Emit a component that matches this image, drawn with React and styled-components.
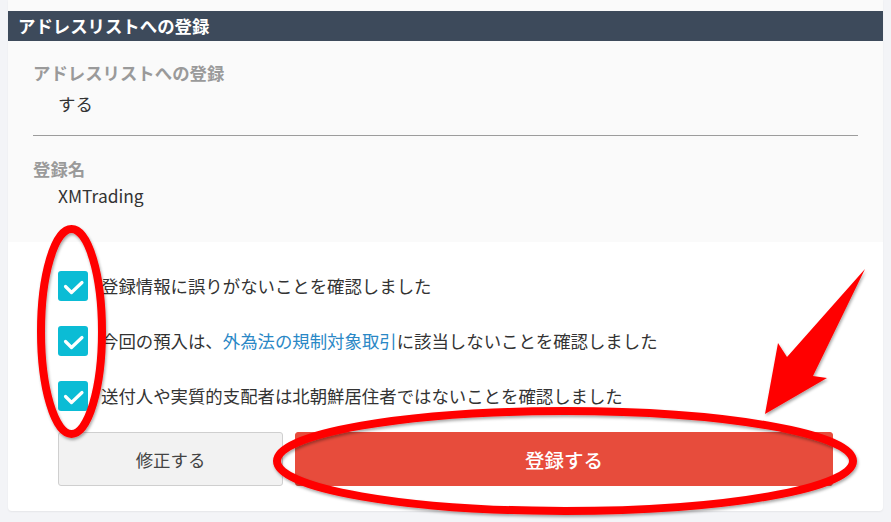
import React from "react";
import styled, { createGlobalStyle } from "styled-components";

const GlobalStyle = createGlobalStyle`
  html, body {
    margin: 0;
    padding: 0;
    background: #f3f4f7;
  }
  body {
    font-family: "Noto Sans CJK JP", "Noto Sans", sans-serif;
    color: #333;
  }
  * { box-sizing: border-box; }
`;

const Page = styled.div`
  position: relative;
  width: 891px;
  height: 522px;
  padding: 0 8px;
  overflow: hidden;
`;

const Card = styled.div`
  background: #ffffff;
  border-radius: 0 0 4px 4px;
  box-shadow: 0 1px 2px rgba(0, 0, 0, 0.06);
  overflow: hidden;
`;

const PrevTail = styled.div`
  height: 11px;
  background: #fafafa;
`;

const Header = styled.h2`
  margin: 0;
  height: 30px;
  line-height: 30px;
  padding-left: 10px;
  background: #3d4a5b;
  color: #ffffff;
  font-size: 17.4px;
  font-weight: 700;
`;

const Info = styled.div`
  background: #fafafa;
  padding: 18.5px 25px 33px;
`;

const Label = styled.div`
  font-size: 17.4px;
  line-height: 26px;
  font-weight: 700;
  color: #9a9a9a;
`;

const Value = styled.div`
  font-size: 17.4px;
  line-height: 26px;
  color: #333;
  padding-left: 25px;
  margin-top: ${(p) => p.$gap}px;
`;

const Divider = styled.hr`
  border: 0;
  border-top: 1px solid #9c9c9c;
  margin: 18px 0 19.5px;
`;

const Confirm = styled.div`
  padding: 29px 50px 25px;
`;

const CheckList = styled.div`
  display: flex;
  flex-direction: column;
  gap: 25px;
`;

const CheckRow = styled.label`
  display: flex;
  align-items: center;
  gap: 13px;
  font-size: 17.4px;
  line-height: 30px;
  color: #333;
`;

const Box = styled.span`
  flex: none;
  width: 30px;
  height: 30px;
  border-radius: 3px;
  background: #0bbcd5;
  display: flex;
  align-items: center;
  justify-content: center;
`;

const Link = styled.a`
  color: #2a88c6;
  text-decoration: none;
`;

const Buttons = styled.div`
  display: grid;
  grid-template-columns: 225px 1fr;
  gap: 12px;
  margin-top: 21px;
`;

const Button = styled.button`
  height: 54px;
  border-radius: 3px;
  font-family: "Noto Sans CJK JP", "Noto Sans", sans-serif;
  cursor: pointer;
  background: ${(p) => (p.$primary ? "#e74c3c" : "#f2f2f2")};
  border: 1px solid ${(p) => (p.$primary ? "#e74c3c" : "#cfcfcf")};
  color: ${(p) => (p.$primary ? "#ffffff" : "#444")};
  font-size: ${(p) => (p.$primary ? "19.5px" : "17.4px")};
  font-weight: ${(p) => (p.$primary ? 500 : 400)};
`;

const Overlay = styled.svg`
  position: absolute;
  left: 0;
  top: 0;
  pointer-events: none;
  overflow: visible;
`;

const Check = () => (
  <svg width="30" height="30" viewBox="0 0 30 30">
    <path
      d="M7.5 15.5 L13.5 21.5 L24 11.5"
      fill="none"
      stroke="#fff"
      strokeWidth="3.2"
      strokeLinecap="round"
      strokeLinejoin="round"
    />
  </svg>
);

export default function App() {
  return (
    <>
      <GlobalStyle />
      <Page>
        <Card>
          <PrevTail />
          <Header>アドレスリストへの登録</Header>
          <Info>
            <Label>アドレスリストへの登録</Label>
            <Value $gap={5.5}>する</Value>
            <Divider />
            <Label>登録名</Label>
            <Value $gap={1.5}>XMTrading</Value>
          </Info>
          <Confirm>
            <CheckList>
              <CheckRow>
                <Box><Check /></Box>
                登録情報に誤りがないことを確認しました
              </CheckRow>
              <CheckRow>
                <Box><Check /></Box>
                <span>
                  今回の預入は、<Link href="#">外為法の規制対象取引</Link>に該当しないことを確認しました
                </span>
              </CheckRow>
              <CheckRow>
                <Box><Check /></Box>
                送付人や実質的支配者は北朝鮮居住者ではないことを確認しました
              </CheckRow>
            </CheckList>
            <Buttons>
              <Button>修正する</Button>
              <Button $primary>登録する</Button>
            </Buttons>
          </Confirm>
        </Card>
        <Overlay width="891" height="522" viewBox="0 0 891 522">
          <defs>
            <filter id="sh" x="-20%" y="-20%" width="140%" height="140%">
              <feDropShadow dx="1" dy="2" stdDeviation="1.6" floodColor="#000" floodOpacity="0.35" />
            </filter>
          </defs>
          <g filter="url(#sh)">
            <ellipse cx="71.5" cy="331.5" rx="30.5" ry="102.5" fill="none" stroke="#ff0000" strokeWidth="8" />
            <ellipse cx="565" cy="461" rx="288" ry="50" fill="none" stroke="#ff0000" strokeWidth="8" />
            <polygon points="865,269 813,376 827,378 765,414 778,343 787,357" fill="#ff0000" />
          </g>
        </Overlay>
      </Page>
    </>
  );
}
